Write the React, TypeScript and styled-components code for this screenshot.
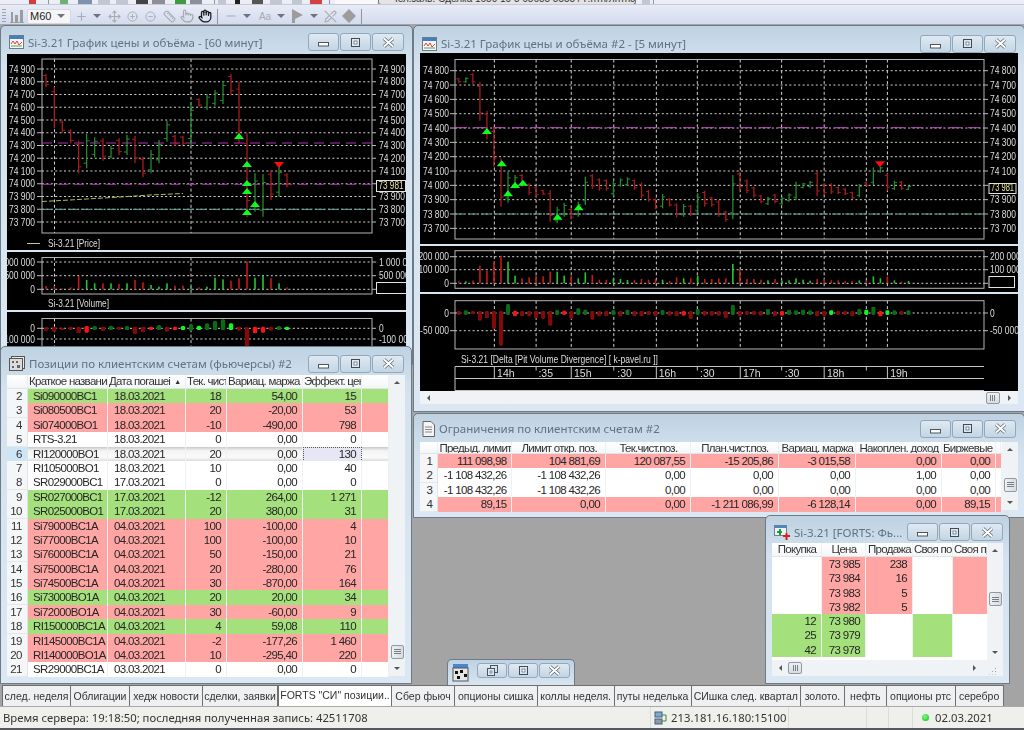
import React from 'react'
import styled, { createGlobalStyle } from 'styled-components'
import { Plus, Move, CirclePlus, CircleMinus, Ruler, Pointer, Hand, Minus, PenOff } from 'lucide-react'

const GlobalStyle = createGlobalStyle`
    html, body {
        margin: 0;
        padding: 0;
        background: #a4a4a4;
    }
    * {
        box-sizing: border-box;
    }
`

/* ---------- shell ---------- */

const Screen = styled.div`
    width: 1024px;
    height: 730px;
    display: flex;
    flex-direction: column;
    overflow: hidden;
    font-family: 'Liberation Sans', Arial, sans-serif;
    filter: blur(0.45px);
`

const TopBars = styled.div`
    height: 24px;
    flex: 0 0 auto;
    background: linear-gradient(#eef0f8, #d3dbee);
    display: flex;
    flex-direction: column;
`

const StripRow = styled.div`
    flex: 0 0 auto;
    height: 5px;
    display: flex;
    overflow: hidden;
    border-bottom: 1px solid #c4cad6;
`

const StripBit = styled.div<{ $w: number; $ml: number; $c: string }>`
    flex: 0 0 auto;
    height: 4px;
    width: ${p => p.$w}px;
    margin-left: ${p => p.$ml}px;
    background: ${p => p.$c};
`

const StripCombo = styled.div`
    flex: 0 0 auto;
    width: 258px;
    height: 5px;
    margin-left: 1px;
    padding-left: 12px;
    background: #e4e4e4;
    border: 1px solid #777;
    border-top: 0;
    border-radius: 0 0 3px 3px;
    overflow: hidden;
`

const StripText = styled.div`
    margin-top: -6px;
    font-size: 10px;
    line-height: 9px;
    color: #333;
    white-space: nowrap;
`

const ToolRow = styled.div`
    flex: 0 0 auto;
    height: 19px;
    display: flex;
    align-items: center;
    padding: 3px 0 0 2px;
`

const Grip = styled.div`
    width: 4px;
    height: 14px;
    margin-right: 1px;
    background: repeating-linear-gradient(#9aa2b4 0 1px, transparent 1px 3px);
`

const ToolSlot = styled.div<{ $w: number; $dark?: boolean }>`
    flex: 0 0 auto;
    width: ${p => p.$w}px;
    display: flex;
    justify-content: center;
    align-items: center;
    color: ${p => (p.$dark ? '#1a1a1a' : '#a9abb0')};
    font-size: 10px;
`

const Caret = styled.span`
    width: 0;
    height: 0;
    border-left: 4px solid transparent;
    border-right: 4px solid transparent;
    border-top: 4px solid #6e7380;
`

const ToolSep = styled.div`
    width: 1px;
    height: 15px;
    background: #8f95a3;
`

const Combo = styled.div`
    flex: 0 0 auto;
    width: 44px;
    height: 15px;
    padding: 0 5px 0 2px;
    display: flex;
    align-items: center;
    justify-content: space-between;
    background: #f6f6f6;
    border: 1px solid #d4d8e2;
    border-radius: 2px;
    font-size: 11px;
    color: #222;
`

const Workspace = styled.div`
    position: relative;
    flex: 1 1 auto;
    background: #a4a4a4;
`

/* ---------- mdi windows ---------- */

const MdiWindow = styled.section<{ $x: number; $y: number; $w: number; $h: number }>`
    position: absolute;
    left: ${p => p.$x}px;
    top: ${p => p.$y - 24}px;
    width: ${p => p.$w}px;
    height: ${p => p.$h}px;
    padding: 0 6px 7px;
    display: flex;
    flex-direction: column;
    background: linear-gradient(#bfd2e2, #d3e2ee 40px, #dbe8f3);
    border: 1px solid #6d7b88;
    border-radius: 5px 5px 0 0;
`

const TitleBar = styled.header<{ $h: number; $pt: number; $end?: number }>`
    flex: 0 0 auto;
    height: ${p => p.$h}px;
    display: flex;
    align-items: center;
    gap: 4px;
    padding: ${p => p.$pt}px ${p => p.$end ?? 2}px 0 2px;
`

const TitleText = styled.h2`
    flex: 1 1 auto;
    margin: 0;
    min-width: 0;
    font-family: 'Noto Sans', sans-serif;
    font-size: 11.5px;
    font-weight: 400;
    color: #5f7383;
    white-space: nowrap;
    overflow: hidden;
`

const ButtonGroup = styled.div`
    flex: 0 0 auto;
    display: flex;
    gap: 1px;
`

const CaptionButton = styled.button<{ $w?: number; $h?: number }>`
    width: ${p => p.$w ?? 31}px;
    height: ${p => p.$h ?? 18}px;
    padding: 0;
    display: flex;
    justify-content: center;
    align-items: center;
    background: linear-gradient(#dfe9f2, #c3d5e4);
    border: 1px solid #93a8ba;
    border-radius: 3px;
`

const MinGlyph = () => (
    <svg width="11" height="10" viewBox="0 0 11 10">
        <rect x="0.5" y="5.5" width="10" height="3.5" fill="#fff" stroke="#4a5560" />
    </svg>
)

const MaxGlyph = () => (
    <svg width="11" height="11" viewBox="0 0 11 11">
        <rect x="1.5" y="1.5" width="8" height="8" fill="#dce8f2" stroke="#3f4a55" />
        <rect x="4" y="4" width="3" height="3" fill="#fff" stroke="#3f4a55" strokeWidth="0.6" />
    </svg>
)

const CloseGlyph = () => (
    <svg width="13" height="11" viewBox="0 0 13 11">
        <path d="M2 1.5 L11 9.5 M11 1.5 L2 9.5" stroke="#56636f" strokeWidth="3.4" />
        <path d="M2 1.5 L11 9.5 M11 1.5 L2 9.5" stroke="#fff" strokeWidth="2" />
    </svg>
)

const RestoreGlyph = () => (
    <svg width="13" height="13" viewBox="0 0 13 13">
        <rect x="4.5" y="1.5" width="7" height="7" fill="none" stroke="#4a5560" />
        <rect x="1.5" y="4.5" width="7" height="7" fill="#dce8f2" stroke="#4a5560" />
        <rect x="4" y="7" width="2" height="2" fill="#fff" stroke="#4a5560" strokeWidth="0.6" />
    </svg>
)

const Captions = () => (
    <ButtonGroup>
        <CaptionButton>
            <MinGlyph />
        </CaptionButton>
        <CaptionButton>
            <MaxGlyph />
        </CaptionButton>
        <CaptionButton $w={32}>
            <CloseGlyph />
        </CaptionButton>
    </ButtonGroup>
)

const ChartIcon = () => (
    <svg width="15" height="14" viewBox="0 0 15 14">
        <rect x="0.5" y="0.5" width="14" height="13" fill="#f6f6f6" stroke="#6e7a86" />
        <rect x="1" y="1" width="13" height="3" fill="#3f7fc4" />
        <path d="M2 9 L4 6 L6 9 L8 6 L10 10 L13 7" fill="none" stroke="#e04040" />
        <path d="M2 11 L13 11" stroke="#5aa05a" />
    </svg>
)

const GridIcon = () => (
    <svg width="16" height="15" viewBox="0 0 16 15">
        <rect x="2.5" y="0.5" width="13" height="12" fill="#e9e9e9" stroke="#555" />
        <rect x="0.5" y="2.5" width="13" height="12" fill="#dcdcdc" stroke="#555" />
        <path d="M3 5h2v2H3zM7 5h2v2H7zM3 10h2v2H3zM8 9h3v3H8z" fill="#666" />
    </svg>
)

const DocIcon = () => (
    <svg width="13" height="16" viewBox="0 0 13 16">
        <path d="M1 .5H9L12.5 4V15.5H1Z" fill="#f4f4f4" stroke="#666" />
        <path d="M3 6H10M3 8.5H10M3 11H10" stroke="#888" />
    </svg>
)

const QuotesIcon = () => (
    <svg width="16" height="15" viewBox="0 0 16 15">
        <rect x="0.5" y="0.5" width="12" height="10" fill="#eef3f8" stroke="#6e8090" />
        <rect x="1" y="1" width="11" height="2" fill="#4a86c8" />
        <path d="M3 6H8V8H3Z" fill="#1f9d2f" />
        <path d="M5 4H7V10H5Z" fill="#1f9d2f" />
        <path d="M9 10H16V12H9ZM11.5 8H13.5V15H11.5Z" fill="#d82020" />
    </svg>
)

const DesktopIcon = () => (
    <svg width="18" height="19" viewBox="0 0 18 19">
        <rect x="1" y="1" width="15" height="4" fill="#4a86c8" />
        <rect x="1" y="5" width="15" height="13" fill="#e6e6e6" stroke="#555" />
        <path d="M3 8h3v3H3zM8 7h3v3H8zM12 11h3v3h-3zM5 13h3v3H5z" fill="#111" />
    </svg>
)

/* ---------- chart panes ---------- */

const ChartStack = styled.div`
    flex: 1 1 auto;
    min-height: 0;
    display: flex;
    flex-direction: column;
    gap: 2px;
    overflow: hidden;
`

const Pane = styled.svg<{ $h: number }>`
    display: block;
    flex: 0 0 auto;
    width: 100%;
    height: ${p => p.$h}px;
    background: #000;
    font-family: 'Liberation Sans', Arial, sans-serif;
`

const labelWidth = (s: string) => {
    let w = 0
    for (const ch of s) w += ch === ' ' ? 2.4 : ch === '-' ? 3 : 4.7
    return w
}

const NarrowText = ({ x, y, children, end, fill, width }: { x: number; y: number; children: string; end?: boolean; fill?: string; width?: number }) => (
    <text
        x={x}
        y={y}
        fontSize="10.5"
        fill={fill ?? '#dedede'}
        textAnchor={end ? 'end' : 'start'}
        textLength={width ?? labelWidth(children)}
        lengthAdjust="spacingAndGlyphs"
    >
        {children}
    </text>
)

type Level = { y: number; label?: string; noRight?: boolean }

interface PlotProps {
    box: [number, number, number, number]
    levels: Level[]
    vlines: number[]
    gap: number
}

function PlotFrame({ box, levels, vlines, gap }: PlotProps) {
    const [x0, y0, x1, y1] = box
    return (
        <g>
            {levels.map((l, i) => (
                <g key={i}>
                    <line x1={x0} x2={x1} y1={l.y} y2={l.y} stroke="#d0d0d0" strokeDasharray="2 2.4" />
                    <line x1={x0 - 5} x2={x0} y1={l.y} y2={l.y} stroke="#bdbdbd" />
                    <line x1={x1} x2={x1 + 4} y1={l.y} y2={l.y} stroke="#bdbdbd" />
                    {l.label && (
                        <NarrowText x={x0 - gap} y={l.y + 3.6} end>
                            {l.label}
                        </NarrowText>
                    )}
                    {l.label && !l.noRight && (
                        <NarrowText x={x1 + gap} y={l.y + 3.6}>
                            {l.label}
                        </NarrowText>
                    )}
                </g>
            ))}
            {vlines.map(x => (
                <line key={x} x1={x} x2={x} y1={y0} y2={y1} stroke="#d0d0d0" strokeDasharray="3 2.4" />
            ))}
            <rect x={x0} y={y0} width={x1 - x0} height={y1 - y0} fill="none" stroke="#b4b4b4" />
        </g>
    )
}

const RED = '#a81c1c'
const GREEN = '#26892e'
const VOL_RED = '#c81818'
const VOL_GREEN = '#25c52e'
const DELTA: Record<string, string> = { d: '#840a0a', e: '#0b6a16', r: '#f81414', g: '#14f524' }

type Ohlc = [number, number, number, string]

function OhlcBars({ data, mapX, mapY, tick }: { data: Ohlc[]; mapX: (z: number) => number; mapY: (z: number) => number; tick: number }) {
    return (
        <g>
            {data.map(([zx, hi, lo, c], i) => {
                const x = mapX(zx)
                const top = mapY(hi)
                const bottom = mapY(lo)
                const span = bottom - top
                const color = c === 'r' ? RED : GREEN
                const open = c === 'r' ? top + span * 0.12 : bottom - span * 0.15
                const close = c === 'r' ? bottom - span * 0.2 : top + span * 0.2
                return (
                    <g key={i} stroke={color}>
                        <line x1={x} x2={x} y1={top} y2={bottom} strokeWidth="1.3" />
                        <line x1={x - tick} x2={x} y1={open} y2={open} />
                        <line x1={x} x2={x + tick} y1={close} y2={close} />
                    </g>
                )
            })}
        </g>
    )
}

const Triangle = ({ x, y, down }: { x: number; y: number; down?: boolean }) =>
    down ? (
        <polygon points={`${x - 5},${y - 3} ${x + 5},${y - 3} ${x},${y + 3}`} fill="#ff0d0d" />
    ) : (
        <polygon points={`${x - 5},${y + 3} ${x + 5},${y + 3} ${x},${y - 3}`} fill="#0cff1c" />
    )

const PriceBox = ({ x, y, w, h }: { x: number; y: number; w: number; h: number }) => (
    <g>
        <rect x={x} y={y} width={w} height={h} fill="#000" stroke="#e2e2e2" />
        <NarrowText x={x + 2} y={y + h - 2.2} fill="#e8e89c" width={w - 4}>
            73 981
        </NarrowText>
    </g>
)

/* chart 1 (60 min), numbers taken in 3x picture coordinates */
const h1Bars: Ohlc[] = [
    [138, 222, 262, 'r'], [163, 260, 385, 'r'], [187, 362, 398, 'r'], [212, 388, 430, 'r'], [236, 422, 520, 'r'], [260, 402, 505, 'g'],
    [284, 412, 472, 'g'], [309, 415, 482, 'r'], [333, 438, 475, 'g'], [357, 415, 465, 'r'], [381, 405, 465, 'g'], [405, 408, 490, 'r'],
    [429, 470, 532, 'r'], [453, 450, 520, 'g'], [477, 420, 490, 'g'], [501, 362, 425, 'g'], [525, 405, 438, 'r'], [549, 408, 435, 'r'],
    [573, 305, 435, 'g'], [597, 295, 320, 'r'], [621, 282, 330, 'g'], [645, 270, 317, 'g'], [669, 243, 312, 'g'], [693, 222, 285, 'r'],
    [717, 245, 430, 'r'], [741, 400, 652, 'r'], [765, 520, 635, 'g'], [789, 522, 650, 'g'], [813, 512, 600, 'r'], [837, 500, 590, 'g'],
    [861, 520, 562, 'r'],
]
const h1Volume = [138, 138, 145, 142, 108, 120, 130, 130, 130, 132, 130, 120, 127, 135, 140, 130, 137, 137, 140, 142, 140, 113, 118, 122, 115, 65, 113, 107, 115, 130, 142]
const h1Delta: [number, number, string][] = [
    [262, 272, 'd'], [260, 275, 'd'], [263, 270, 'd'], [260, 270, 'd'], [260, 280, 'd'], [258, 278, 'r'], [258, 270, 'e'], [260, 273, 'd'],
    [257, 270, 'e'], [260, 270, 'd'], [258, 270, 'e'], [260, 282, 'd'], [260, 277, 'd'], [260, 270, 'r'], [255, 270, 'e'], [260, 275, 'd'],
    [260, 270, 'r'], [258, 270, 'g'], [253, 272, 'e'], [257, 270, 'g'], [250, 270, 'e'], [243, 270, 'e'], [238, 270, 'e'], [250, 270, 'g'],
    [260, 272, 'd'], [262, 330, 'd'], [260, 280, 'r'], [260, 278, 'r'], [260, 272, 'd'], [258, 270, 'e'], [260, 270, 'g'],
]

function HourChart() {
    const mx = (z: number) => z / 3
    const my = (z: number) => z / 3
    const vy = (z: number) => 240 + z / 3
    const prices = ['74 900', '74 800', '74 700', '74 600', '74 500', '74 400', '74 300', '74 200', '74 100', '74 000', '73 900', '73 800', '73 700']
    const box1: [number, number, number, number] = [42, 59, 372, 233]
    const vlines = [54.5, 191]
    return (
        <ChartStack>
            <Pane $h={196} viewBox="7 54 399 196">
                <PlotFrame box={box1} gap={7} vlines={vlines} levels={prices.map((label, i) => ({ y: 69 + i * 12.75, label, noRight: label === '74 000' }))} />
                <line x1={42} x2={372} y1={143} y2={143} stroke="#b42cb4" strokeDasharray="10 6" />
                <line x1={42} x2={372} y1={184.3} y2={184.3} stroke="#b42cb4" strokeDasharray="10 6" />
                <line x1={42} x2={372} y1={209.3} y2={209.3} stroke="#62aaa0" strokeDasharray="9 4" />
                <polyline points="42,201.5 70,200 120,197 150,195 183,193.5" fill="none" stroke="#b8ba56" strokeDasharray="5 2" />
                <OhlcBars data={h1Bars} mapX={mx} mapY={my} tick={3} />
                <Triangle x={239} y={136} />
                <Triangle x={247} y={164} />
                <Triangle x={247} y={183} />
                <Triangle x={247} y={191} />
                <Triangle x={247} y={212} />
                <Triangle x={255} y={204} />
                <Triangle x={279} y={165} down />
                <PriceBox x={376.5} y={180.5} w={29} h={11} />
                <line x1={27} x2={40} y1={243.5} y2={243.5} stroke="#c8c880" />
                <NarrowText x={48} y={246.5} width={52}>
                    {'Si-3.21 [Price]'}
                </NarrowText>
            </Pane>
            <Pane $h={58} viewBox="7 252 399 58">
                <PlotFrame
                    box={[42, 257.5, 372, 294]}
                    gap={7}
                    vlines={vlines}
                    levels={[
                        { y: 262, label: '1 000 000' },
                        { y: 275.7, label: '500 000' },
                        { y: 289.3, label: '0', noRight: true },
                    ]}
                />
                {h1Volume.map((top, i) => (
                    <rect key={i} x={mx(h1Bars[i][0]) - 0.8} y={vy(top)} width={1.6} height={vy(148) - vy(top)} fill={h1Bars[i][3] === 'r' ? VOL_RED : VOL_GREEN} />
                ))}
                <rect x={376.5} y={282.5} width={30} height={11} fill="#000" stroke="#e2e2e2" />
                <NarrowText x={48} y={307} width={61}>
                    {'Si-3.21 [Volume]'}
                </NarrowText>
            </Pane>
            <Pane $h={48} viewBox="7 312 399 48">
                <PlotFrame
                    box={[42, 318.5, 372, 370]}
                    gap={7}
                    vlines={vlines}
                    levels={[
                        { y: 328.3, label: '0' },
                        { y: 339, label: '-100 000' },
                    ]}
                />
                {h1Delta.map(([a, b, c], i) => (
                    <rect key={i} x={mx(h1Bars[i][0]) - 2.2} y={vy(a)} width={4.4} height={(b - a) / 3} rx={1.6} fill={DELTA[c]} />
                ))}
            </Pane>
        </ChartStack>
    )
}

/* chart 2 (5 min): x in 2.56x and y in 3x picture coordinates */
const m5Rows: [number, number, string, number, number, number, string][] = [
    [175, 188, 'r', 127, 216, 228, 'd'], [172, 188, 'g', 127, 214, 228, 'e'], [160, 192, 'r', 125, 216, 226, 'd'], [185, 302, 'r', 80, 216, 245, 'd'],
    [272, 358, 'r', 95, 216, 238, 'd'], [320, 440, 'r', 68, 216, 270, 'd'], [415, 560, 'r', 50, 216, 320, 'd'], [455, 548, 'g', 68, 195, 228, 'e'],
    [465, 505, 'g', 110, 215, 232, 'r'], [462, 500, 'r', 118, 216, 232, 'd'], [490, 525, 'r', 115, 216, 232, 'd'], [500, 530, 'r', 110, 216, 238, 'd'],
    [510, 525, 'r', 112, 216, 240, 'd'], [510, 605, 'r', 98, 216, 260, 'd'], [560, 610, 'g', 98, 213, 228, 'e'], [548, 590, 'g', 110, 215, 228, 'r'],
    [565, 598, 'r', 110, 216, 240, 'd'], [545, 590, 'g', 118, 208, 228, 'e'], [470, 555, 'g', 100, 212, 228, 'e'], [462, 507, 'r', 108, 216, 242, 'd'],
    [475, 512, 'r', 122, 216, 232, 'd'], [478, 512, 'r', 122, 216, 232, 'd'], [482, 528, 'g', 118, 213, 228, 'e'], [475, 500, 'g', 120, 216, 232, 'd'],
    [472, 498, 'g', 123, 212, 228, 'e'], [478, 510, 'r', 123, 216, 232, 'd'], [488, 535, 'r', 120, 216, 232, 'd'], [510, 545, 'r', 122, 216, 228, 'd'],
    [535, 568, 'r', 120, 216, 232, 'd'], [522, 565, 'g', 122, 213, 228, 'e'], [535, 560, 'r', 126, 216, 230, 'd'], [550, 592, 'r', 115, 216, 232, 'd'],
    [552, 590, 'g', 118, 216, 230, 'r'], [555, 588, 'r', 118, 216, 240, 'd'], [520, 580, 'g', 110, 210, 228, 'e'], [512, 560, 'r', 120, 216, 230, 'd'],
    [530, 560, 'r', 120, 216, 230, 'd'], [540, 590, 'r', 118, 216, 230, 'd'], [572, 605, 'r', 118, 216, 238, 'd'], [465, 598, 'g', 75, 198, 228, 'e'],
    [455, 512, 'r', 92, 216, 232, 'd'], [478, 520, 'r', 120, 216, 228, 'd'], [500, 532, 'r', 120, 216, 228, 'd'], [525, 550, 'r', 122, 216, 230, 'd'],
    [530, 555, 'g', 124, 210, 228, 'e'], [522, 550, 'r', 120, 216, 232, 'd'], [530, 555, 'g', 125, 216, 230, 'r'], [520, 545, 'g', 124, 212, 228, 'e'],
    [485, 540, 'g', 118, 214, 228, 'e'], [488, 505, 'g', 122, 212, 228, 'e'], [483, 503, 'g', 125, 214, 228, 'e'], [452, 528, 'r', 120, 216, 232, 'd'],
    [490, 525, 'r', 120, 216, 232, 'd'], [490, 522, 'r', 124, 214, 228, 'g'], [500, 522, 'r', 124, 216, 228, 'd'], [505, 525, 'r', 126, 216, 228, 'd'],
    [515, 538, 'r', 126, 216, 232, 'd'], [492, 532, 'g', 124, 210, 228, 'e'], [487, 498, 'r', 126, 212, 228, 'g'], [442, 495, 'g', 112, 203, 228, 'e'],
    [440, 458, 'g', 118, 216, 232, 'r'], [460, 512, 'r', 112, 214, 228, 'g'], [482, 510, 'g', 124, 214, 228, 'e'], [483, 510, 'r', 128, 216, 228, 'd'],
    [497, 510, 'g', 126, 214, 228, 'e'],
]

const TimeLabel = styled.text`
    font-size: 10.5px;
    fill: #dedede;
`

function MinuteChart() {
    const mx = (z: number) => 412 + z / 2.562
    const my = (z: number) => 20 + z / 3
    const dy = (z: number) => 240 + z / 3
    const zx = (i: number) => 120 + i * 18
    const prices = ['74 800', '74 700', '74 600', '74 500', '74 400', '74 300', '74 200', '74 100', '74 000', '73 900', '73 800', '73 700']
    const vlines = [211, 318, 408, 517, 626, 731, 841, 947, 1056, 1164, 1218].map(mx)
    const bars: Ohlc[] = m5Rows.map((r, i) => [zx(i), r[0], r[1], r[2]])
    const times: [number, string][] = [[218, '14h'], [324, ':35'], [415, '15h'], [526, ':30'], [632, '16h'], [738, ':30'], [848, '17h'], [955, ':30'], [1063, '18h'], [1225, '19h']]
    const solid = [211, 408, 626, 841, 1056, 1218]
    const short = [318, 517, 731, 947, 1164]
    return (
        <ChartStack>
            <Pane $h={191} viewBox="420 53 598 191">
                <PlotFrame box={[455, 59.5, 984, 239]} gap={6} vlines={vlines} levels={prices.map((label, i) => ({ y: 70.7 + i * 14.33, label, noRight: label === '74 000' }))} />
                <line x1={455} x2={984} y1={127.7} y2={127.7} stroke="#cc48cc" strokeDasharray="12 7" />
                <line x1={455} x2={984} y1={214} y2={214} stroke="#62a6a0" strokeDasharray="9 4" />
                <OhlcBars data={bars} mapX={mx} mapY={my} tick={2.6} />
                {[
                    [192, 333],
                    [230, 430],
                    [246, 520],
                    [264, 495],
                    [284, 488],
                    [373, 590],
                    [427, 562],
                ].map(([a, b]) => (
                    <Triangle key={a} x={mx(a)} y={my(b)} />
                ))}
                <Triangle x={mx(1199)} y={my(433)} down />
                <PriceBox x={989} y={183.5} w={27} h={10} />
            </Pane>
            <Pane $h={46} viewBox="420 247 598 46">
                <PlotFrame
                    box={[455, 251.7, 984, 289.3]}
                    gap={6}
                    vlines={vlines}
                    levels={[
                        { y: 257.7, label: '200 000' },
                        { y: 270.7, label: '100 000' },
                        { y: 284.3, label: '0', noRight: true },
                    ]}
                />
                {m5Rows.map((r, i) => (
                    <rect key={i} x={mx(zx(i)) - 0.8} y={dy(r[3])} width={1.6} height={(133 - r[3]) / 3} fill={r[2] === 'r' ? VOL_RED : VOL_GREEN} />
                ))}
                <rect x={989} y={277.5} width={25.5} height={11} fill="#000" stroke="#e2e2e2" />
            </Pane>
            <Pane $h={98} viewBox="420 295 598 98">
                <PlotFrame
                    box={[455, 301.7, 984, 350]}
                    gap={6}
                    vlines={vlines}
                    levels={[
                        { y: 314, label: '0' },
                        { y: 331.7, label: '-50 000' },
                    ]}
                />
                {m5Rows.map((r, i) => (
                    <rect key={i} x={mx(zx(i)) - 2} y={dy(r[4])} width={4} height={(r[5] - r[4]) / 3} rx={1.4} fill={DELTA[r[6]]} />
                ))}
                <NarrowText x={461} y={363.5} width={197}>
                    {'Si-3.21  [Delta [Pit Volume Divergence] [ k-pavel.ru ]]'}
                </NarrowText>
                <g stroke="#c4c4c4">
                    <line x1={455} x2={984} y1={367.5} y2={367.5} />
                    <line x1={455} x2={984} y1={379.5} y2={379.5} />
                    <line x1={455} x2={984} y1={391.5} y2={391.5} />
                    <line x1={455} x2={455} y1={367.5} y2={391.5} />
                    {solid.map(z => (
                        <line key={z} x1={mx(z)} x2={mx(z)} y1={367.5} y2={379.5} />
                    ))}
                    {short.map(z => (
                        <line key={z} x1={mx(z)} x2={mx(z)} y1={367.5} y2={371.5} />
                    ))}
                </g>
                {times.map(([z, t]) => (
                    <TimeLabel key={z} x={mx(z)} y={377.5}>
                        {t}
                    </TimeLabel>
                ))}
            </Pane>
        </ChartStack>
    )
}

/* ---------- scrollbars ---------- */

const VTrack = styled.div<{ $w: number }>`
    flex: 0 0 auto;
    width: ${p => p.$w}px;
    display: flex;
    flex-direction: column;
    align-items: center;
    padding: 6px 0;
    background: #eff3f6;
`

const Arrow = styled.span<{ $dir: 'up' | 'down' | 'left' | 'right' }>`
    flex: 0 0 auto;
    width: 0;
    height: 0;
    border: 3.5px solid transparent;
    ${p => (p.$dir === 'up' ? 'border-bottom-color: #555; border-top-width: 0;' : '')}
    ${p => (p.$dir === 'down' ? 'border-top-color: #555; border-bottom-width: 0;' : '')}
    ${p => (p.$dir === 'left' ? 'border-right-color: #555; border-left-width: 0;' : '')}
    ${p => (p.$dir === 'right' ? 'border-left-color: #555; border-right-width: 0;' : '')}
`

const VThumb = styled.div<{ $top: number }>`
    width: 13px;
    height: 14px;
    margin-top: ${p => p.$top}px;
    margin-bottom: auto;
    display: flex;
    flex-direction: column;
    justify-content: center;
    align-items: center;
    gap: 1px;
    background: linear-gradient(90deg, #eef0f2, #d8dde2);
    border: 1px solid #8e99a3;
    border-radius: 2px;
`

const ThumbLine = styled.i`
    display: block;
    width: 7px;
    height: 1px;
    background: #777f88;
`

const VScroll = ({ thumbTop, width }: { thumbTop: number; width: number }) => (
    <VTrack $w={width}>
        <Arrow $dir="up" />
        <VThumb $top={thumbTop}>
            <ThumbLine />
            <ThumbLine />
            <ThumbLine />
        </VThumb>
        <Arrow $dir="down" />
    </VTrack>
)

const HTrack = styled.div<{ $h: number }>`
    flex: 0 0 auto;
    height: ${p => p.$h}px;
    display: flex;
    align-items: center;
    padding: 0 7px;
    background: #eff3f6;
`

const HThumb = styled.div<{ $left: number }>`
    width: 14px;
    height: 12px;
    margin-left: ${p => p.$left}px;
    margin-right: auto;
    display: flex;
    justify-content: center;
    align-items: center;
    gap: 1px;
    background: linear-gradient(#eef0f2, #d8dde2);
    border: 1px solid #8e99a3;
    border-radius: 2px;
`

const ThumbBar = styled.i`
    display: block;
    width: 1px;
    height: 6px;
    background: #777f88;
`

const HScroll = ({ thumbLeft, height, children }: { thumbLeft: number; height: number; children?: React.ReactNode }) => (
    <HTrack $h={height}>
        <Arrow $dir="left" />
        <HThumb $left={thumbLeft}>
            <ThumbBar />
            <ThumbBar />
            <ThumbBar />
        </HThumb>
        <Arrow $dir="right" />
        {children}
    </HTrack>
)

const SizeGrip = styled.div`
    width: 8px;
    height: 8px;
    margin-left: 12px;
    margin-top: 5px;
    background: radial-gradient(circle, #9aa4ae 0.7px, transparent 0.9px) 0 0 / 3px 3px;
    clip-path: polygon(100% 0, 100% 100%, 0 100%);
`

/* ---------- tables ---------- */

type Tone = 'green' | 'red' | 'plain' | 'selected'

const toneColor: Record<Tone, string> = {
    green: '#a4e17c',
    red: '#ffa6a4',
    plain: '#ffffff',
    selected: 'linear-gradient(#c9c9c9, #f4f4f4 25%, #fafafa 70%, #d2d2d2)',
}

const TableWrap = styled.div`
    flex: 1 1 auto;
    min-height: 0;
    display: flex;
    background: #fff;
`

const TableBody = styled.div`
    flex: 1 1 auto;
    min-width: 0;
`

const Row = styled.div<{ $cols: string; $h: number }>`
    display: grid;
    grid-template-columns: ${p => p.$cols};
    height: ${p => p.$h}px;
`

const HeadRow = styled(Row)`
    background: linear-gradient(#ffffff, #f3f6f8);
    border-bottom: 1px solid #dfe4e8;
`

const HeadCell = styled.div<{ $center?: boolean }>`
    min-width: 0;
    padding-left: 1px;
    font-size: 11.5px;
    line-height: 12px;
    letter-spacing: -0.72px;
    color: #333;
    white-space: nowrap;
    overflow: hidden;
    text-align: ${p => (p.$center ? 'center' : 'left')};
    border-right: 1px solid #edf0f3;
`

const Cell = styled.div<{ $tone: Tone; $right?: boolean; $pad?: number; $focus?: boolean }>`
    min-width: 0;
    padding: 0 ${p => (p.$right ? (p.$pad ?? 5) : 0)}px 0 ${p => (p.$right ? 0 : (p.$pad ?? 5))}px;
    background: ${p => (p.$focus ? '#e6e6f4' : toneColor[p.$tone])};
    font-size: 11.5px;
    line-height: 14px;
    letter-spacing: -0.65px;
    color: #262626;
    white-space: nowrap;
    overflow: hidden;
    text-align: ${p => (p.$right ? 'right' : 'left')};
    border-right: 1px solid #eef1f4;
    ${p => (p.$focus ? 'outline: 1px dotted #555; outline-offset: -1px;' : '')}
`

const RowNo = styled.div<{ $active?: boolean }>`
    padding-right: 5px;
    background: ${p => (p.$active ? '#cde6f6' : '#f4f6f8')};
    border-bottom: 1px solid #e4e8ec;
    border-right: 1px solid #dfe4e8;
    font-size: 11.5px;
    line-height: 14px;
    letter-spacing: -0.5px;
    text-align: right;
    color: #333;
`

const SortMark = styled.span`
    font-size: 7px;
    margin-left: 4px;
    vertical-align: 1px;
`

const posCols = '21px 80px 78px 41px 76px 59px 27px'
const limCols = '18.4px 74px 93.5px 85px 88px 77px 86px 54px 5.6px'
const bookCols = '50px 44px 47px 40px 35px'

const positions: [number, string, string, string, string, string, Tone][] = [
    [2, 'Si090000BC1', '18.03.2021', '18', '54,00', '15', 'green'],
    [3, 'Si080500BC1', '18.03.2021', '20', '-20,00', '53', 'red'],
    [4, 'Si074000BO1', '18.03.2021', '-10', '-490,00', '798', 'red'],
    [5, 'RTS-3.21', '18.03.2021', '0', '0,00', '0', 'plain'],
    [6, 'RI120000BO1', '18.03.2021', '20', '0,00', '130', 'selected'],
    [7, 'RI105000BO1', '18.03.2021', '10', '0,00', '40', 'plain'],
    [8, 'SR029000BC1', '17.03.2021', '0', '0,00', '0', 'plain'],
    [9, 'SR027000BC1', '17.03.2021', '-12', '264,00', '1 271', 'green'],
    [10, 'SR025000BO1', '17.03.2021', '20', '380,00', '31', 'green'],
    [11, 'Si79000BC1A', '04.03.2021', '100', '-100,00', '4', 'red'],
    [12, 'Si77000BC1A', '04.03.2021', '100', '-100,00', '10', 'red'],
    [13, 'Si76000BC1A', '04.03.2021', '50', '-150,00', '21', 'red'],
    [14, 'Si75000BC1A', '04.03.2021', '20', '-280,00', '76', 'red'],
    [15, 'Si74500BC1A', '04.03.2021', '30', '-870,00', '164', 'red'],
    [16, 'Si73000BO1A', '04.03.2021', '20', '20,00', '34', 'green'],
    [17, 'Si72000BO1A', '04.03.2021', '30', '-60,00', '9', 'red'],
    [18, 'RI150000BC1A', '04.03.2021', '4', '59,08', '110', 'green'],
    [19, 'RI145000BC1A', '04.03.2021', '-2', '-177,26', '1 460', 'red'],
    [20, 'RI140000BO1A', '04.03.2021', '10', '-295,40', '220', 'red'],
    [21, 'SR29000BC1A', '03.03.2021', '0', '0,00', '0', 'plain'],
]

const limits: [number, string[], Tone][] = [
    [1, ['111 098,98', '104 881,69', '120 087,55', '-15 205,86', '-3 015,58', '0,00', '0,00'], 'red'],
    [2, ['-1 108 432,26', '-1 108 432,26', '0,00', '0,00', '0,00', '1,00', '0,00'], 'plain'],
    [3, ['-1 108 432,26', '-1 108 432,26', '0,00', '0,00', '0,00', '0,00', '0,00'], 'plain'],
    [4, ['89,15', '0,00', '0,00', '-1 211 086,99', '-6 128,14', '0,00', '89,15'], 'red'],
]

const book: [string, string, string, Tone[]][] = [
    ['', '73 985', '238', ['plain', 'red', 'red', 'plain', 'red']],
    ['', '73 984', '16', ['plain', 'red', 'red', 'plain', 'red']],
    ['', '73 983', '5', ['plain', 'red', 'red', 'plain', 'red']],
    ['', '73 982', '5', ['plain', 'red', 'red', 'plain', 'red']],
    ['12', '73 980', '', ['green', 'green', 'plain', 'green', 'plain']],
    ['25', '73 979', '', ['green', 'green', 'plain', 'green', 'plain']],
    ['42', '73 978', '', ['green', 'green', 'plain', 'green', 'plain']],
]

function PositionsTable() {
    return (
        <TableWrap>
            <TableBody>
                <HeadRow $cols={posCols} $h={14}>
                    <HeadCell />
                    <HeadCell>Краткое названи</HeadCell>
                    <HeadCell>
                        Дата погашеі<SortMark>▲</SortMark>
                    </HeadCell>
                    <HeadCell>Тек. чист</HeadCell>
                    <HeadCell>Вариац. маржа</HeadCell>
                    <HeadCell>Эффект. цен</HeadCell>
                    <HeadCell />
                </HeadRow>
                {positions.map(([no, name, date, qty, margin, price, tone]) => (
                    <Row key={no} $cols={posCols} $h={14.4}>
                        <RowNo $active={tone === 'selected'}>{no}</RowNo>
                        <Cell $tone={tone}>{name}</Cell>
                        <Cell $tone={tone} $pad={6}>
                            {date}
                        </Cell>
                        <Cell $tone={tone} $right>
                            {qty}
                        </Cell>
                        <Cell $tone={tone} $right>
                            {margin}
                        </Cell>
                        <Cell $tone={tone} $right $focus={tone === 'selected'}>
                            {price}
                        </Cell>
                        <Cell $tone={tone} />
                    </Row>
                ))}
            </TableBody>
            <VScroll width={16} thumbTop={260.5} />
        </TableWrap>
    )
}

function LimitsTable() {
    const heads = ['Предыд. лимит', 'Лимит откр. поз.', 'Тек.чист.поз.', 'План.чист.поз.', 'Вариац. маржа', 'Накоплен. доход', 'Биржевые']
    return (
        <TableWrap>
            <TableBody>
                <HeadRow $cols={limCols} $h={12}>
                    <HeadCell />
                    {heads.map((h, i) => (
                        <HeadCell key={h} $center={i > 0 && i < 6}>
                            {h}
                        </HeadCell>
                    ))}
                    <HeadCell />
                </HeadRow>
                {limits.map(([no, cells, tone]) => (
                    <Row key={no} $cols={limCols} $h={14.3}>
                        <RowNo>{no}</RowNo>
                        {cells.map((c, i) => (
                            <Cell key={i} $tone={tone} $right>
                                {c}
                            </Cell>
                        ))}
                        <Cell $tone={tone} />
                    </Row>
                ))}
            </TableBody>
            <VScroll width={16} thumbTop={26.5} />
        </TableWrap>
    )
}

function OrderBook() {
    return (
        <>
            <TableWrap>
                <TableBody>
                    <HeadRow $cols={bookCols} $h={14}>
                        <HeadCell $center>Покупка</HeadCell>
                        <HeadCell $center>Цена</HeadCell>
                        <HeadCell $center>Продажа</HeadCell>
                        <HeadCell>Своя по</HeadCell>
                        <HeadCell>Своя пр</HeadCell>
                    </HeadRow>
                    {book.map(([buy, price, sell, tones]) => (
                        <Row key={price} $cols={bookCols} $h={14.3}>
                            <Cell $tone={tones[0]} $right>
                                {buy}
                            </Cell>
                            <Cell $tone={tones[1]} $right>
                                {price}
                            </Cell>
                            <Cell $tone={tones[2]} $right>
                                {sell}
                            </Cell>
                            <Cell $tone={tones[3]} />
                            <Cell $tone={tones[4]} />
                        </Row>
                    ))}
                </TableBody>
                <VScroll width={16} thumbTop={40} />
            </TableWrap>
            <HScroll height={16} thumbLeft={6}>
                <SizeGrip />
            </HScroll>
        </>
    )
}

/* ---------- minimized window ---------- */

const MiniWindow = styled.div`
    position: absolute;
    left: 447px;
    top: 635px;
    width: 128px;
    height: 26px;
    padding: 3px 3px 0 4px;
    display: flex;
    align-items: flex-start;
    gap: 7px;
    background: linear-gradient(#bfd2e2, #d8e5f0);
    border: 1px solid #6d7b88;
    border-bottom: 0;
    border-radius: 5px 5px 0 0;
`

/* ---------- tabs and status ---------- */

const TabBar = styled.nav`
    flex: 0 0 auto;
    height: 21px;
    display: flex;
    padding-left: 2px;
    background: #a4a4a4;
`

const Tab = styled.div<{ $w: number; $active?: boolean }>`
    flex: 0 0 auto;
    width: ${p => p.$w}px;
    display: flex;
    justify-content: center;
    align-items: center;
    font-size: 10.5px;
    color: #333;
    white-space: nowrap;
    overflow: hidden;
    background: ${p => (p.$active ? '#fff' : '#eef0f2')};
    border: 1px solid #6f6f6f;
    border-left-width: ${p => (p.$active ? 1 : 0)}px;
    border-bottom: 0;
    padding-bottom: ${p => (p.$active ? 2 : 0)}px;
    &:first-child {
        border-left-width: 1px;
    }
`

const StatusBar = styled.footer`
    flex: 0 0 auto;
    height: 22px;
    display: flex;
    background: #efefeb;
    border-top: 1px solid #a8a8a8;
    font-family: 'Noto Sans', sans-serif;
    font-size: 11.3px;
    color: #333;
`

const StatusCell = styled.div<{ $w: number; $grow?: boolean }>`
    flex: ${p => (p.$grow ? '1 1 auto' : '0 0 auto')};
    width: ${p => p.$w}px;
    display: flex;
    align-items: center;
    gap: 3px;
    padding-left: 3px;
    white-space: nowrap;
    overflow: hidden;
    border-right: ${p => (p.$grow ? '0' : '1px solid #dcdcd8')};
`

const OnlineDot = styled.span`
    width: 7px;
    height: 7px;
    margin: 0 3px 0 6px;
    border-radius: 50%;
    background: radial-gradient(circle at 40% 35%, #7dff7d, #0ebb14);
`

const BottomStrip = styled.div`
    flex: 0 0 auto;
    height: 2px;
    background: #55585c;
`

const ServerIcon = () => (
    <svg width="14" height="14" viewBox="0 0 14 14">
        <rect x="1" y="1" width="7" height="5" fill="#7fa9cf" stroke="#44607a" />
        <rect x="1" y="8" width="7" height="5" fill="#8d9aa6" stroke="#44607a" />
        <path d="M8 4H12V10H8" fill="none" stroke="#3b8d3b" />
    </svg>
)

const tabs: [string, number, boolean?][] = [
    ['след. неделя', 69],
    ['Облигации', 59],
    ['хедж новости', 73],
    ['сделки, заявки', 75],
    ['FORTS "СИ" позиции..', 114, true],
    ['Сбер фьюч', 63],
    ['опционы сишка', 82.6],
    ['коллы неделя.', 77],
    ['путы неделька', 77],
    ['СИшка след. квартал', 109.4],
    ['золото.', 44],
    ['нефть', 41.6],
    ['опционы ртс', 69],
    ['серебро', 48],
]

const strip: [number, number, string][] = [
    [29, 7, '#d63a3a'],
    [12, 1, '#8f95a3'],
    [11, 8, '#6faf6f'],
    [10, 14, '#7d93ad'],
    [6, 12, '#c0c6d2'],
    [6, 12, '#c0c6d2'],
    [8, 12, '#444'],
    [4, 13, '#8a8f98'],
    [10, 11, '#3f9a3f'],
    [4, 12, '#8a8f98'],
    [12, 1, '#8f95a3'],
    [3, 8, '#c0c6d2'],
    [9, 5, '#222'],
    [12, 11, '#555'],
    [7, 12, '#c0c6d2'],
    [10, 10, '#c0c6d2'],
    [8, 12, '#d84040'],
    [7, 1, '#8f95a3'],
    [5, 42, '#f8f8f8'],
]

export default function App() {
    return (
        <Screen>
            <GlobalStyle />
            <TopBars>
                <StripRow>
                    {strip.map(([ml, w, c], i) => (
                        <StripBit key={i} $ml={ml} $w={w} $c={c} />
                    ))}
                    <StripCombo>
                        <StripText>Чел.заяв. Сделка 1650 10 5 65655 5555 / Г.нтн/лнтнэнтнлнтнл</StripText>
                    </StripCombo>
                    <StripBit $ml={6} $w={8} $c="#c0c6d2" />
                    <StripBit $ml={3} $w={1} $c="#8f95a3" />
                </StripRow>
                <ToolRow>
                    <Grip />
                    <ToolSlot $w={20}>
                        <svg width="14" height="14" viewBox="0 0 14 14" fill="#9c9c9c">
                            <path d="M1 3h2v11H1zM5 6h3v8H5zM10 1h3v13h-3z" />
                            <path d="M0 13.2h14v.8H0z" />
                        </svg>
                    </ToolSlot>
                    <Combo>
                        M60
                        <Caret />
                    </Combo>
                    <ToolSlot $w={20}>
                        <Plus size={13} />
                    </ToolSlot>
                    <ToolSlot $w={12}>
                        <Caret />
                    </ToolSlot>
                    <ToolSlot $w={22}>
                        <Move size={13} />
                    </ToolSlot>
                    <ToolSlot $w={14}>
                        <CirclePlus size={11} />
                    </ToolSlot>
                    <ToolSlot $w={22}>
                        <CircleMinus size={11} />
                    </ToolSlot>
                    <ToolSlot $w={16}>
                        <Ruler size={13} />
                    </ToolSlot>
                    <ToolSlot $w={20}>
                        <Pointer size={14} />
                    </ToolSlot>
                    <ToolSlot $w={16} $dark>
                        <Hand size={14} strokeWidth={2.2} />
                    </ToolSlot>
                    <ToolSlot $w={8}>
                        <ToolSep />
                    </ToolSlot>
                    <ToolSlot $w={20}>
                        <Minus size={14} />
                    </ToolSlot>
                    <ToolSlot $w={12}>
                        <Caret />
                    </ToolSlot>
                    <ToolSlot $w={24}>Aa</ToolSlot>
                    <ToolSlot $w={8}>
                        <Caret />
                    </ToolSlot>
                    <ToolSlot $w={24}>
                        <svg width="12" height="14" viewBox="0 0 12 14" fill="#9c9c9c">
                            <path d="M1 0 L12 6 L4 10 V14 H1Z" />
                        </svg>
                    </ToolSlot>
                    <ToolSlot $w={10}>
                        <Caret />
                    </ToolSlot>
                    <ToolSlot $w={22}>
                        <PenOff size={13} />
                    </ToolSlot>
                    <ToolSlot $w={16}>
                        <svg width="14" height="14" viewBox="0 0 14 14" fill="#9c9c9c">
                            <path d="M7 0 L14 7 L7 14 L0 7Z" />
                        </svg>
                    </ToolSlot>
                    <ToolSlot $w={8}>
                        <ToolSep />
                    </ToolSlot>
                </ToolRow>
            </TopBars>

            <Workspace>
                <MdiWindow $x={0} $y={25} $w={413} $h={340}>
                    <TitleBar $h={28} $pt={4}>
                        <ChartIcon />
                        <TitleText>Si-3.21 График цены и объёма - [60 минут]</TitleText>
                        <Captions />
                    </TitleBar>
                    <HourChart />
                </MdiWindow>

                <MdiWindow $x={413} $y={25} $w={612} $h={387}>
                    <TitleBar $h={27} $pt={8}>
                        <ChartIcon />
                        <TitleText>Si-3.21 График цены и объёма #2 - [5 минут]</TitleText>
                        <Captions />
                    </TitleBar>
                    <MinuteChart />
                    <HScroll height={13} thumbLeft={555.5} />
                </MdiWindow>

                <MdiWindow $x={413} $y={413} $w={612} $h={105}>
                    <TitleBar $h={28} $pt={1}>
                        <DocIcon />
                        <TitleText>Ограничения по клиентским счетам #2</TitleText>
                        <Captions />
                    </TitleBar>
                    <LimitsTable />
                </MdiWindow>

                <MdiWindow $x={0} $y={346} $w={412} $h={338}>
                    <TitleBar $h={28} $pt={5} $end={1}>
                        <GridIcon />
                        <TitleText>Позиции по клиентским счетам (фьючерсы) #2</TitleText>
                        <Captions />
                    </TitleBar>
                    <PositionsTable />
                </MdiWindow>

                <MdiWindow $x={765} $y={515} $w={245} $h={169}>
                    <TitleBar $h={27} $pt={5} $end={0}>
                        <QuotesIcon />
                        <TitleText>Si-3.21 [FORTS: Фь...</TitleText>
                        <Captions />
                    </TitleBar>
                    <OrderBook />
                </MdiWindow>

                <MiniWindow>
                    <DesktopIcon />
                    <ButtonGroup>
                        <CaptionButton $w={30} $h={15}>
                            <RestoreGlyph />
                        </CaptionButton>
                        <CaptionButton $w={30} $h={15}>
                            <MaxGlyph />
                        </CaptionButton>
                        <CaptionButton $w={31} $h={15}>
                            <CloseGlyph />
                        </CaptionButton>
                    </ButtonGroup>
                </MiniWindow>
            </Workspace>

            <TabBar>
                {tabs.map(([label, w, active]) => (
                    <Tab key={label} $w={w} $active={active}>
                        {label}
                    </Tab>
                ))}
            </TabBar>

            <StatusBar>
                <StatusCell $w={651}>Время сервера: 19:18:50; последняя полученная запись: 42511708</StatusCell>
                <StatusCell $w={138}>
                    <ServerIcon />
                    213.181.16.180:15100
                </StatusCell>
                <StatusCell $w={78} />
                <StatusCell $w={22} />
                <StatusCell $w={24} />
                <StatusCell $w={110} $grow>
                    <OnlineDot />
                    02.03.2021
                </StatusCell>
            </StatusBar>
            <BottomStrip />
        </Screen>
    )
}
